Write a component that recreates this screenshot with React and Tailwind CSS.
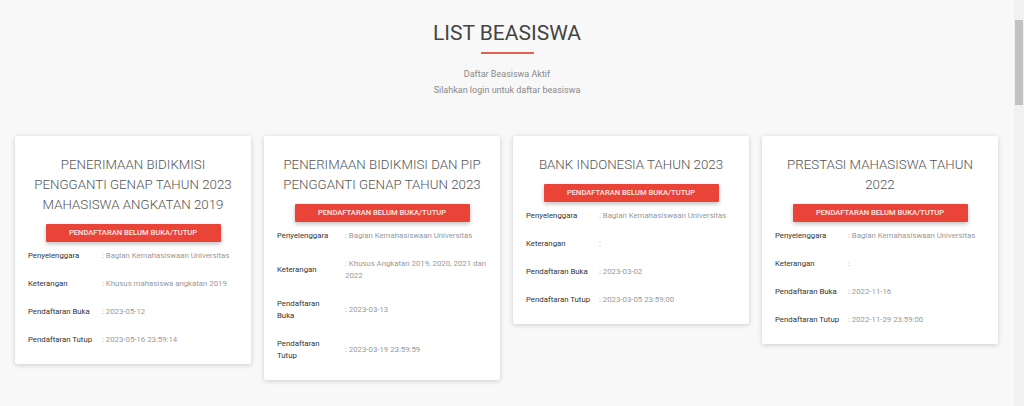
import React from 'react';

const beasiswa = [
  {
    judul: 'PENERIMAAN BIDIKMISI PENGGANTI GENAP TAHUN 2023 MAHASISWA ANGKATAN 2019',
    penyelenggara: 'Bagian Kemahasiswaan Universitas',
    keterangan: 'Khusus mahasiswa angkatan 2019',
    buka: '2023-05-12',
    tutup: '2023-05-16 23:59:14',
    labelWidth: 'w-[74px]',
  },
  {
    judul: 'PENERIMAAN BIDIKMISI DAN PIP PENGGANTI GENAP TAHUN 2023',
    penyelenggara: 'Bagian Kemahasiswaan Universitas',
    keterangan: 'Khusus Angkatan 2019, 2020, 2021 dan 2022',
    buka: '2023-03-13',
    tutup: '2023-03-19 23:59:59',
    labelWidth: 'w-[68px]',
  },
  {
    judul: 'BANK INDONESIA TAHUN 2023',
    penyelenggara: 'Bagian Kemahasiswaan Universitas',
    keterangan: '',
    buka: '2023-03-02',
    tutup: '2023-03-05 23:59:00',
    labelWidth: 'w-[73px]',
  },
  {
    judul: 'PRESTASI MAHASISWA TAHUN 2022',
    penyelenggara: 'Bagian Kemahasiswaan Universitas',
    keterangan: '',
    buka: '2022-11-16',
    tutup: '2022-11-29 23:59:00',
    labelWidth: 'w-[73px]',
  },
];

const Row = ({ label, value }) => (
  <tr>
    <td className="py-[8px] pr-[8px] align-middle text-[#333] leading-[12px]">{label}</td>
    <td className="py-[8px] align-middle text-[#999] leading-[12px]">: {value}</td>
  </tr>
);

const BeasiswaCard = ({ item }) => (
  <div className="w-[236px] shrink-0 rounded-[2px] bg-white px-[13px] pt-[19px] pb-[10px] shadow-[0_1px_5px_rgba(0,0,0,0.18)]">
    <h3 className="text-center text-[13.3px] font-light leading-[20px] text-[#555]">{item.judul}</h3>
    <div className="mt-[9px] flex justify-center">
      <button className="h-[18px] w-[175px] rounded-[1px] bg-[#ea4338] text-[7.6px] font-medium text-[#fde8e6] shadow-[0_2px_4px_rgba(0,0,0,0.25)]">
        PENDAFTARAN BELUM BUKA/TUTUP
      </button>
    </div>
    <table className="w-full table-fixed border-collapse text-[7.8px]">
      <colgroup>
        <col className={item.labelWidth} />
        <col />
      </colgroup>
      <tbody>
        <Row label="Penyelenggara" value={item.penyelenggara} />
        <Row label="Keterangan" value={item.keterangan} />
        <Row label="Pendaftaran Buka" value={item.buka} />
        <Row label="Pendaftaran Tutup" value={item.tutup} />
      </tbody>
    </table>
  </div>
);

export default function App() {
  return (
    <div
      className="flex h-[406px] overflow-hidden bg-[#f8f8f8]"
      style={{ fontFamily: 'Roboto, "Noto Sans", sans-serif' }}
    >
      <main className="flex-1">
        <section className="flex flex-col items-center pt-[20px]">
          <h2 className="text-[21px] font-normal leading-[26px] text-[#444]">LIST BEASISWA</h2>
          <div className="mt-[6px] h-[2px] w-[53px] bg-[#e5604f]" />
          <p className="mt-[12px] text-center text-[9px] leading-[16px] text-[#888]">
            Daftar Beasiswa Aktif
            <br />
            Silahkan login untuk daftar beasiswa
          </p>
        </section>

        <div className="mt-[38px] flex items-start gap-[13px] pl-[15px]">
          {beasiswa.map((item) => (
            <BeasiswaCard key={item.judul} item={item} />
          ))}
        </div>
      </main>

      {/* scrollbar */}
      <div className="flex w-[10px] shrink-0 flex-col bg-[#f1f1f1] pt-[20px]">
        <div className="mx-[1px] h-[85px] bg-[#c1c1c1]" />
      </div>
    </div>
  );
}
